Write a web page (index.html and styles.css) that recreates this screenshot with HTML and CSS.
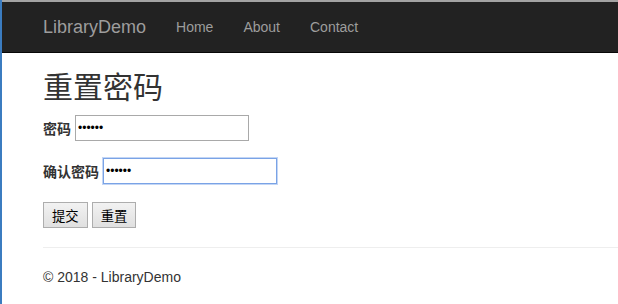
FILE: index.html
```html
<!DOCTYPE html>
<html lang="zh-CN">
<head>
  <meta charset="UTF-8">
  <title>重置密码 - LibraryDemo</title>
  <link rel="stylesheet" href="styles.css">
</head>
<body>
  <div class="frame">
    <div class="navbar">
      <a class="brand" href="#">LibraryDemo</a>
      <ul class="nav">
        <li><a href="#">Home</a></li>
        <li><a href="#">About</a></li>
        <li><a href="#">Contact</a></li>
      </ul>
    </div>

    <div class="body-content">
      <h2>重置密码</h2>
      <form class="reset-form">
        <div class="form-row">
          <label for="pwd">密码</label>
          <input type="password" id="pwd" value="123456">
        </div>
        <div class="form-row">
          <label for="pwd2">确认密码</label>
          <input type="password" id="pwd2" class="focused" value="123456">
        </div>
        <div class="form-actions">
          <button type="button">提交</button>
          <button type="reset">重置</button>
        </div>
      </form>
      <hr>
      <footer>
        <p>&copy; 2018 - LibraryDemo</p>
      </footer>
    </div>
  </div>
</body>
</html>
```

FILE: styles.css
```css
html, body {
  margin: 0;
  padding: 0;
  height: 100%;
  overflow: hidden;
}

body {
  font-family: "Liberation Sans", Arial, "Noto Sans CJK SC", sans-serif;
  font-size: 14px;
  color: #333;
  background: #fff;
}

.frame {
  min-height: 100%;
  border-left: 2px solid #3b7cc0;
  box-sizing: border-box;
}

.navbar {
  display: flex;
  align-items: center;
  height: 50px;
  padding-left: 41px;
  background-color: #222;
  border-top: 2px solid #a3a3a3;
  border-bottom: 1px solid #080808;
}

.brand {
  font-size: 18px;
  color: #9d9d9d;
  text-decoration: none;
  margin-right: 15px;
}

.nav {
  display: flex;
  list-style: none;
  margin: 0;
  padding: 0;
}

.nav a {
  display: block;
  padding: 0 15px;
  color: #9d9d9d;
  text-decoration: none;
  font-size: 14px;
}

.body-content {
  padding-left: 41px;
}

h2 {
  font-size: 30px;
  font-weight: normal;
  line-height: 33px;
  margin: 18px 0 11px;
}

.form-row {
  display: flex;
  align-items: center;
  gap: 4px;
  margin-bottom: 17px;
}

.form-row label {
  font-weight: bold;
  font-size: 14px;
}

.form-row input {
  box-sizing: border-box;
  width: 174px;
  height: 26px;
  padding: 1px 2px;
  font-size: 12px;
  border: 1px solid #a9a9a9;
  outline: none;
}

.form-row input.focused {
  border: 1px solid #7aa3e6;
  box-shadow: 0 0 0 1px #c3d6f5;
}

.form-actions {
  display: flex;
  gap: 4px;
  margin-top: 18px;
}

button {
  height: 26px;
  padding: 0 8px;
  font-family: "Liberation Sans", "Noto Sans CJK SC", sans-serif;
  font-size: 13.33px;
  color: #000;
  background: linear-gradient(#f2f2f2, #e0e0e0);
  border: 1px solid #adadad;
  border-radius: 0;
}

hr {
  border: 0;
  border-top: 1px solid #eee;
  margin: 19px 0 0;
}

footer p {
  margin: 21px 0 0;
}
```
